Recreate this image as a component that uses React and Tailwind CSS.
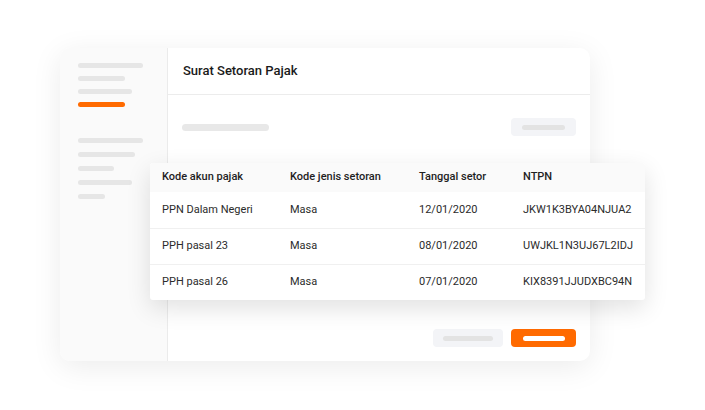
const rows = [
  { akun: "PPN Dalam Negeri", jenis: "Masa", tanggal: "12/01/2020", ntpn: "JKW1K3BYA04NJUA2" },
  { akun: "PPH pasal 23", jenis: "Masa", tanggal: "08/01/2020", ntpn: "UWJKL1N3UJ67L2IDJ" },
  { akun: "PPH pasal 26", jenis: "Masa", tanggal: "07/01/2020", ntpn: "KIX8391JJUDXBC94N" },
];

function Line({ w, orange }) {
  return <div className={`h-[5px] rounded-full ${orange ? "bg-[#ff6a00]" : "bg-[#e6e6e6]"} ${w}`}></div>;
}

export default function App() {
  return (
    <div className="relative w-[705px] h-[410px] bg-white pt-[48px] pl-[60px] font-['Roboto',sans-serif] overflow-hidden">
      {/* Main window */}
      <div className="flex w-[530px] h-[313px] rounded-[10px] bg-white shadow-[0_6px_30px_rgba(0,0,0,0.08)] overflow-hidden">
        {/* Sidebar */}
        <div className="w-[108px] bg-[#fafafa] border-r border-[#ebebeb] pt-[15px] pl-[18px]">
          <div className="flex flex-col gap-[8px]">
            <Line w="w-[65px]" />
            <Line w="w-[47px]" />
            <Line w="w-[54px]" />
            <Line w="w-[47px]" orange />
          </div>
          <div className="flex flex-col gap-[9px] mt-[31px]">
            <Line w="w-[65px]" />
            <Line w="w-[57px]" />
            <Line w="w-[36px]" />
            <Line w="w-[54px]" />
            <Line w="w-[27px]" />
          </div>
        </div>

        {/* Content */}
        <div className="flex-1 flex flex-col">
          <div className="h-[47px] border-b border-[#ececec] flex items-center px-[15px]">
            <span className="text-[13px] font-medium text-[#1a1a1a]">Surat Setoran Pajak</span>
          </div>
          <div className="flex items-center justify-between pl-[14px] pr-[14px] mt-[23px]">
            <div className="w-[87px] h-[7px] rounded-full bg-[#e8e8e8]"></div>
            <div className="w-[65px] h-[18px] rounded-[4px] bg-[#f3f4f7] flex items-center justify-center">
              <div className="w-[43px] h-[5px] rounded-full bg-[#e3e3e3]"></div>
            </div>
          </div>
          <div className="flex-1"></div>
          <div className="flex justify-end gap-[8px] pr-[14px] pb-[14px]">
            <div className="w-[70px] h-[18px] rounded-[4px] bg-[#f3f4f7] flex items-center justify-center">
              <div className="w-[50px] h-[5px] rounded-full bg-[#e3e3e3]"></div>
            </div>
            <div className="w-[65px] h-[18px] rounded-[4px] bg-[#ff6a00] flex items-center justify-center">
              <div className="w-[42px] h-[5px] rounded-full bg-white"></div>
            </div>
          </div>
        </div>
      </div>

      {/* Floating table */}
      <div className="absolute left-[150px] top-[163px] w-[495px] bg-white rounded-[3px] shadow-[0_8px_24px_rgba(0,0,0,0.12)] overflow-hidden text-[11px]">
        <div className="flex items-center h-[29px] bg-[#fafafa] font-medium text-[#1f1f1f]">
          <div className="w-[140px] pl-[12px]">Kode akun pajak</div>
          <div className="w-[129px]">Kode jenis setoran</div>
          <div className="w-[104px]">Tanggal setor</div>
          <div className="flex-1">NTPN</div>
        </div>
        {rows.map((r, i) => (
          <div key={i} className={`flex items-center h-[36px] text-[#2b2b2b] ${i > 0 ? "border-t border-[#f0f0f0]" : ""}`}>
            <div className="w-[140px] pl-[12px]">{r.akun}</div>
            <div className="w-[129px]">{r.jenis}</div>
            <div className="w-[104px]">{r.tanggal}</div>
            <div className="flex-1">{r.ntpn}</div>
          </div>
        ))}
      </div>
    </div>
  );
}
